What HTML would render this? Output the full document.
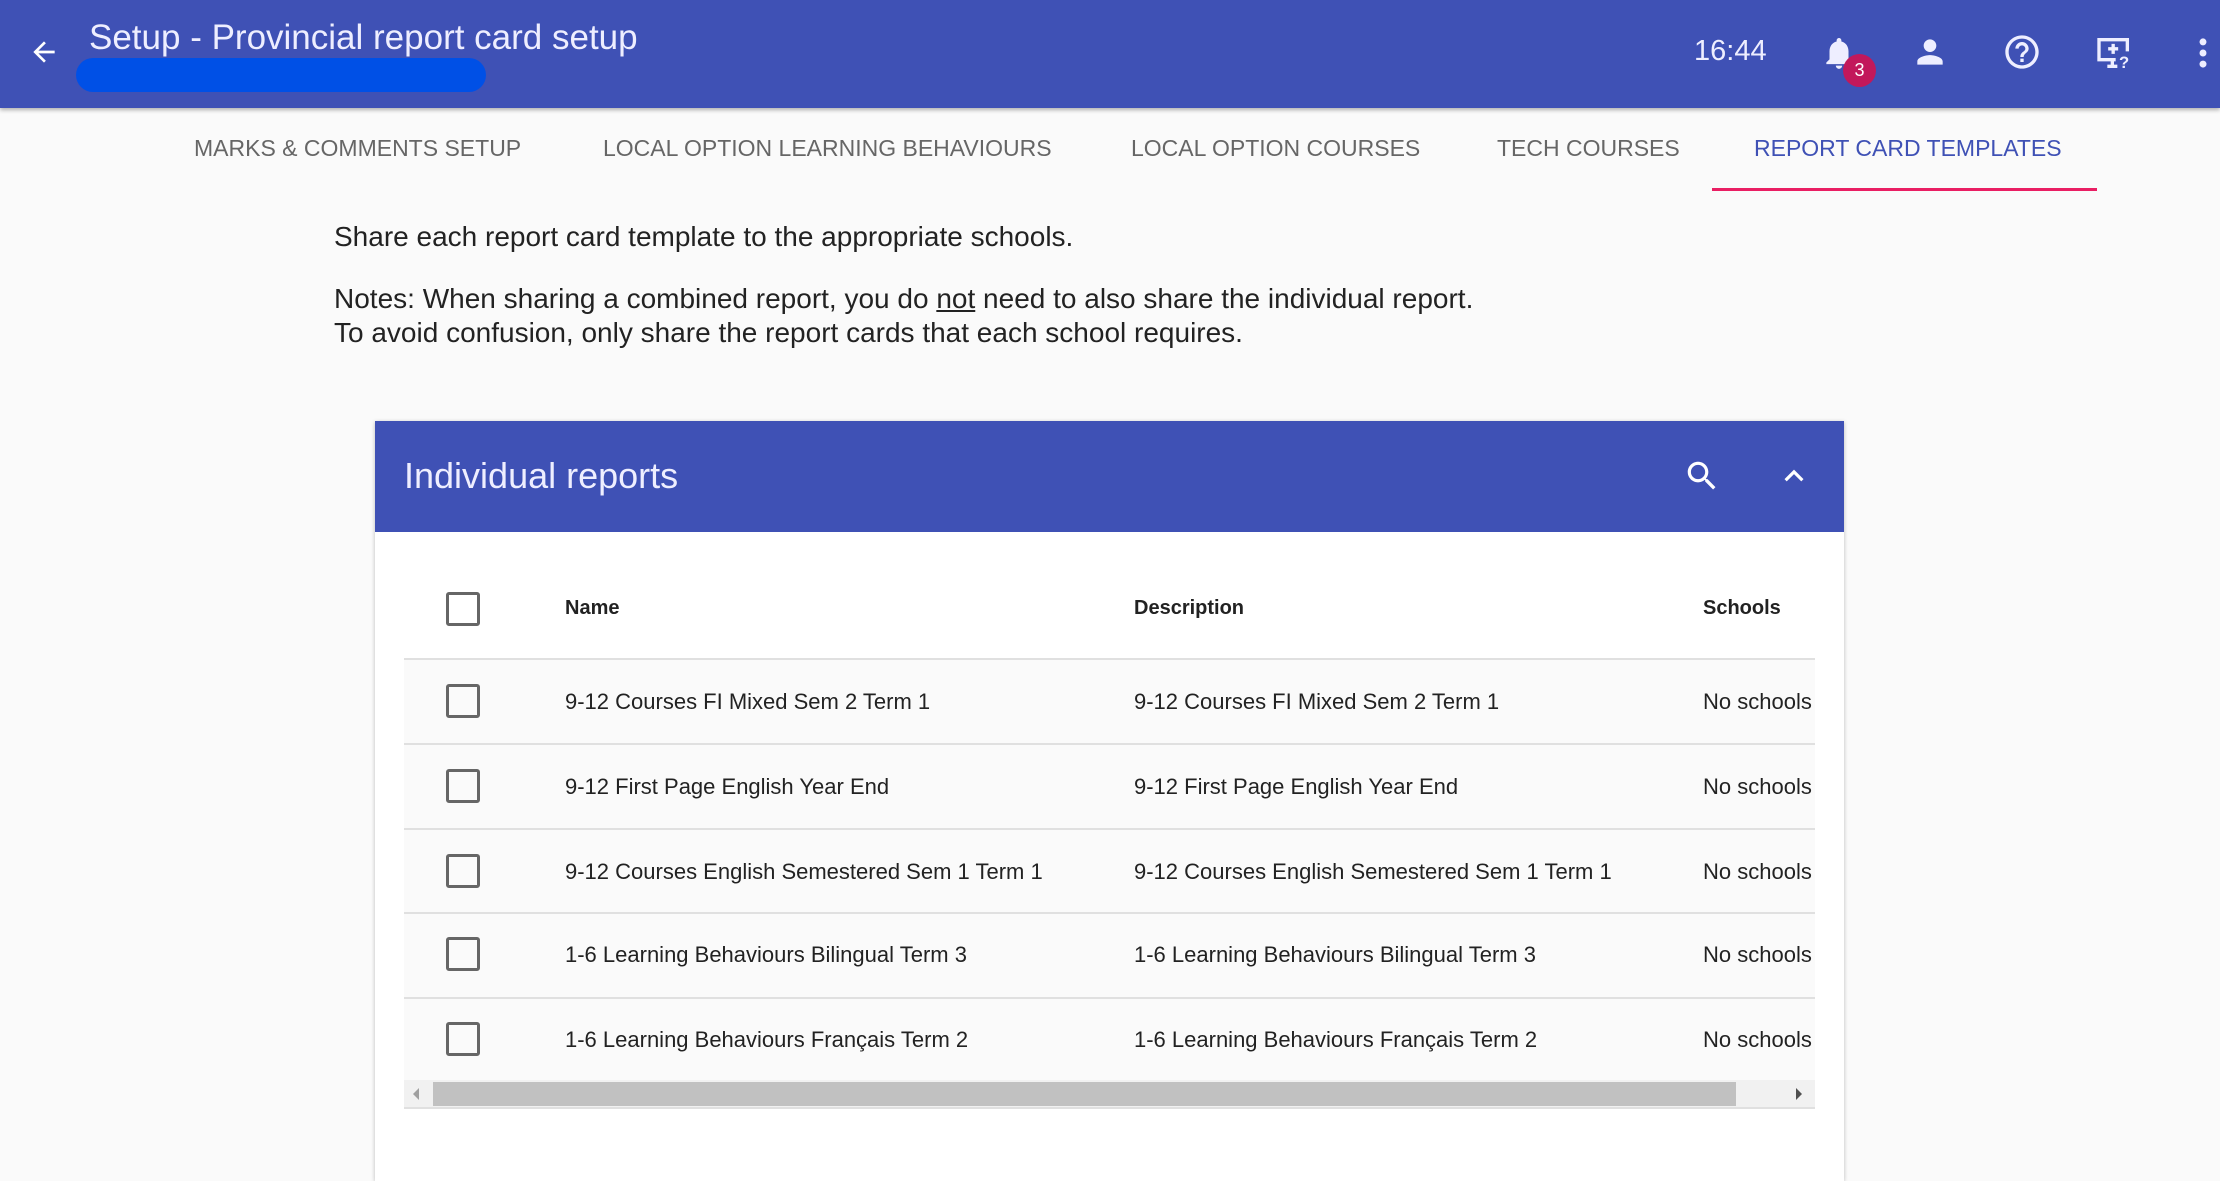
<!DOCTYPE html>
<html><head><meta charset="utf-8"><style>
*{margin:0;padding:0;box-sizing:border-box}
body{width:2220px;height:1142px;overflow:hidden;background:#fafafa;font-family:"Liberation Sans",sans-serif;position:relative}
.abs{position:absolute}
.hdr{left:0;top:0;width:2220px;height:108px;background:#3f51b5;box-shadow:0 2px 4px rgba(0,0,0,.3)}
.tab{position:absolute;top:135px;font-size:23px;color:#666;white-space:nowrap}
.p{position:absolute;left:334px;font-size:28px;color:#222;white-space:nowrap}
.card{left:375px;top:421px;width:1469px;height:760px;background:#fff;box-shadow:0 1px 4px rgba(0,0,0,.25)}
.cb{position:absolute;left:446px;width:34px;height:34px;border:3px solid #666;border-radius:3px}
.t{position:absolute;font-size:22px;color:#222;white-space:nowrap}
.row{position:absolute;left:404px;width:1411px;background:#fafafa;border-top:2px solid #e0e0e0}
</style></head><body>
<div class="abs hdr"></div>
<svg class="abs" style="left:28px;top:36px" width="32" height="32" viewBox="0 0 24 24"><path d="M20 11H7.8l5.6-5.6L12 4l-8 8 8 8 1.4-1.4L7.8 13H20z" fill="#fff"/></svg>
<div class="abs" style="left:89px;top:18px;font-size:35px;color:#eef;white-space:nowrap">Setup - Provincial report card setup</div>
<div class="abs" style="left:76px;top:58px;width:410px;height:34px;background:#0050e6;border-radius:17px"></div>
<div class="abs" style="left:1694px;top:35px;font-size:29px;color:#eef">16:44</div>
<svg class="abs" style="left:1820px;top:34px" width="38" height="38" viewBox="0 0 24 24"><path d="M12 22c1.1 0 2-.9 2-2h-4c0 1.1.9 2 2 2zm6-6v-5c0-3.1-1.6-5.6-4.5-6.3V4c0-.8-.7-1.5-1.5-1.5s-1.5.7-1.5 1.5v.7C7.6 5.4 6 7.9 6 11v5l-2 2v1h16v-1z" fill="#eef"/></svg>
<div class="abs" style="left:1843px;top:54px;width:33px;height:33px;border-radius:50%;background:#c2185b;color:#fff;font-size:18px;text-align:center;line-height:33px">3</div>
<svg class="abs" style="left:1911px;top:33px" width="38" height="38" viewBox="0 0 24 24"><path d="M12 12c2.2 0 4-1.8 4-4s-1.8-4-4-4-4 1.8-4 4 1.8 4 4 4zm0 2c-2.7 0-8 1.3-8 4v2h16v-2c0-2.7-5.3-4-8-4z" fill="#eef"/></svg>
<svg class="abs" style="left:2002px;top:32px" width="40" height="40" viewBox="0 0 24 24"><path d="M11 18h2v-2h-2v2zm1-16C6.5 2 2 6.5 2 12s4.5 10 10 10 10-4.5 10-10S17.5 2 12 2zm0 18c-4.4 0-8-3.6-8-8s3.6-8 8-8 8 3.6 8 8-3.6 8-8 8zm0-14c-2.2 0-4 1.8-4 4h2c0-1.1.9-2 2-2s2 .9 2 2c0 2-3 1.8-3 5h2c0-2.3 3-2.5 3-5 0-2.2-1.8-4-4-4z" fill="#eef"/></svg>
<svg class="abs" style="left:2094px;top:33px" width="40" height="40" viewBox="0 0 24 24" fill="none" stroke="#eef" stroke-width="2"><path d="M20 11V4H3v12h10M8 20h6M11 16v4M11.5 6.5v6M8.5 9.5h6"/><text x="15" y="21" font-size="10" font-weight="bold" fill="#eef" stroke="none" font-family="Liberation Sans">?</text></svg>
<svg class="abs" style="left:2190px;top:34px" width="26" height="38" viewBox="0 0 10 24"><circle cx="5" cy="5" r="2.2" fill="#eef"/><circle cx="5" cy="12" r="2.2" fill="#eef"/><circle cx="5" cy="19" r="2.2" fill="#eef"/></svg>

<div class="tab" style="left:194px">MARKS &amp; COMMENTS SETUP</div>
<div class="tab" style="left:603px">LOCAL OPTION LEARNING BEHAVIOURS</div>
<div class="tab" style="left:1131px">LOCAL OPTION COURSES</div>
<div class="tab" style="left:1497px">TECH COURSES</div>
<div class="tab" style="left:1754px;color:#3f51b5">REPORT CARD TEMPLATES</div>
<div class="abs" style="left:1712px;top:188px;width:385px;height:3px;background:#e91e63"></div>

<div class="p" style="top:221px">Share each report card template to the appropriate schools.</div>
<div class="p" style="top:283px">Notes: When sharing a combined report, you do <u>not</u> need to also share the individual report.</div>
<div class="p" style="top:317px">To avoid confusion, only share the report cards that each school requires.</div>

<div class="abs card"></div>
<div class="abs" style="left:375px;top:421px;width:1469px;height:111px;background:#3f51b5"></div>
<div class="abs" style="left:404px;top:455px;font-size:36px;color:#eef">Individual reports</div>
<svg class="abs" style="left:1683px;top:457px" width="38" height="38" viewBox="0 0 24 24"><path d="M15.5 14h-.8l-.3-.3c1-1.1 1.6-2.6 1.6-4.2C16 5.9 13.1 3 9.5 3S3 5.9 3 9.5 5.9 16 9.5 16c1.6 0 3.1-.6 4.2-1.6l.3.3v.8l5 5 1.5-1.5-5-5zm-6 0C7 14 5 12 5 9.5S7 5 9.5 5 14 7 14 9.5 12 14 9.5 14z" fill="#fff"/></svg>
<svg class="abs" style="left:1775px;top:457px" width="38" height="38" viewBox="0 0 24 24"><path d="M7.4 15.4L12 10.8l4.6 4.6L18 14l-6-6-6 6z" fill="#fff"/></svg>

<div class="cb" style="top:592px"></div>
<div class="t" style="left:565px;top:597px;font-weight:bold;font-size:20px">Name</div>
<div class="t" style="left:1134px;top:597px;font-weight:bold;font-size:20px">Description</div>
<div class="t" style="left:1703px;top:597px;font-weight:bold;font-size:20px">Schools</div>

<div class="row" style="top:658px;height:424px"></div>
<div class="abs" style="left:404px;top:743px;width:1411px;height:2px;background:#e0e0e0"></div>
<div class="abs" style="left:404px;top:828px;width:1411px;height:2px;background:#e0e0e0"></div>
<div class="abs" style="left:404px;top:912px;width:1411px;height:2px;background:#e0e0e0"></div>
<div class="abs" style="left:404px;top:997px;width:1411px;height:2px;background:#e0e0e0"></div>

<div class="cb" style="top:684px"></div><div class="t" style="left:565px;top:689px">9-12 Courses FI Mixed Sem 2 Term 1</div><div class="t" style="left:1134px;top:689px">9-12 Courses FI Mixed Sem 2 Term 1</div><div class="t" style="left:1703px;top:689px;width:112px;overflow:hidden">No schools</div>
<div class="cb" style="top:769px"></div><div class="t" style="left:565px;top:774px">9-12 First Page English Year End</div><div class="t" style="left:1134px;top:774px">9-12 First Page English Year End</div><div class="t" style="left:1703px;top:774px;width:112px;overflow:hidden">No schools</div>
<div class="cb" style="top:854px"></div><div class="t" style="left:565px;top:859px">9-12 Courses English Semestered Sem 1 Term 1</div><div class="t" style="left:1134px;top:859px">9-12 Courses English Semestered Sem 1 Term 1</div><div class="t" style="left:1703px;top:859px;width:112px;overflow:hidden">No schools</div>
<div class="cb" style="top:937px"></div><div class="t" style="left:565px;top:942px">1-6 Learning Behaviours Bilingual Term 3</div><div class="t" style="left:1134px;top:942px">1-6 Learning Behaviours Bilingual Term 3</div><div class="t" style="left:1703px;top:942px;width:112px;overflow:hidden">No schools</div>
<div class="cb" style="top:1022px"></div><div class="t" style="left:565px;top:1027px">1-6 Learning Behaviours Français Term 2</div><div class="t" style="left:1134px;top:1027px">1-6 Learning Behaviours Français Term 2</div><div class="t" style="left:1703px;top:1027px;width:112px;overflow:hidden">No schools</div>

<div class="abs" style="left:404px;top:1080px;width:1411px;height:29px;background:#f1f1f1;border-bottom:2px solid #e0e0e0"></div>
<div class="abs" style="left:433px;top:1082px;width:1303px;height:24px;background:#c1c1c1"></div>
<div class="abs" style="left:413px;top:1088px;width:0;height:0;border-top:6px solid transparent;border-bottom:6px solid transparent;border-right:6px solid #a0a0a0"></div>
<div class="abs" style="left:1796px;top:1088px;width:0;height:0;border-top:6px solid transparent;border-bottom:6px solid transparent;border-left:6px solid #505050"></div>
</body></html>
